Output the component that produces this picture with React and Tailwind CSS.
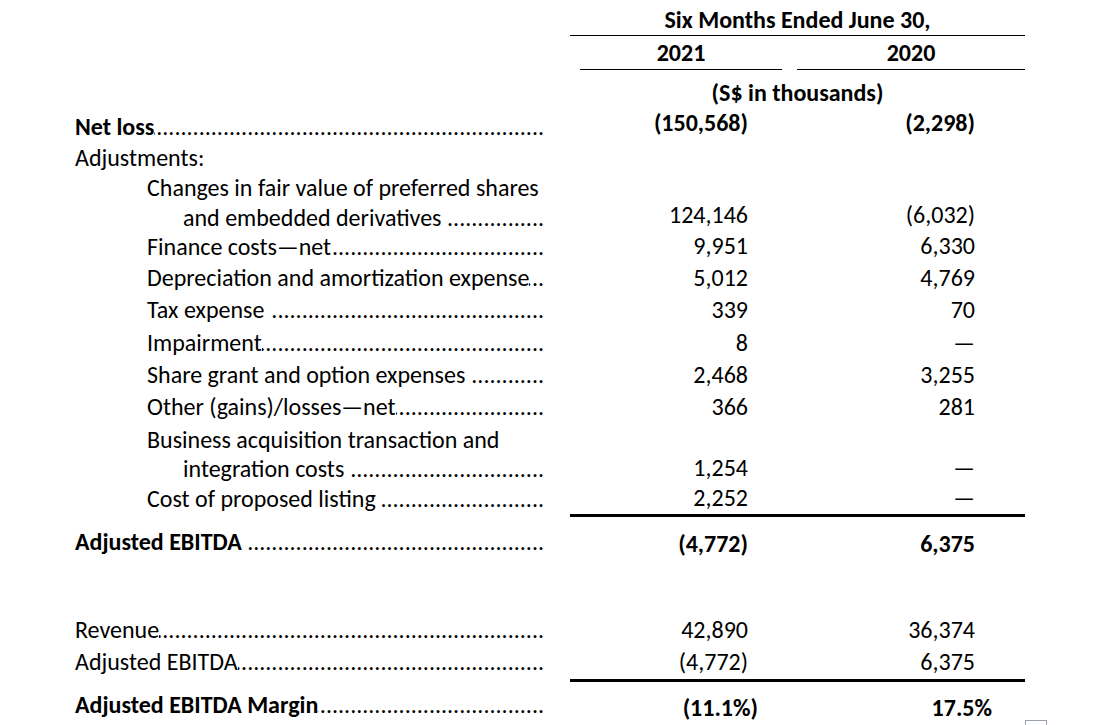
const FONT = "font-['Carlito','Lato','Liberation_Sans',sans-serif]";

const DOTS = ".".repeat(160);

function Leader({ text, bold, space }) {
  return (
    <div className="flex h-[30px] items-center">
      <span className={`shrink-0 whitespace-nowrap ${bold ? "font-bold" : ""}`}>{text}</span>
      <span
        className={`flex min-w-0 flex-1 justify-end overflow-hidden whitespace-nowrap ${
          space ? "ml-[6px]" : ""
        }`}
      >
        <span className="shrink-0">{DOTS}</span>
      </span>
    </div>
  );
}

function Row({ h, label, lines, indent = 0, bold, space, v1, v2, valBold, pr1 = "pr-[49px]", pr2 = "pr-[50px]", lift }) {
  const indentCls = indent === 1 ? "pl-[72px]" : "";
  return (
    <div className={`flex pl-[75px] ${h}`}>
      <div className={`flex w-[469px] flex-col justify-center ${indentCls}`}>
        {lines &&
          lines.map((l, i) => (
            <div key={i} className={`h-[29px] whitespace-nowrap leading-[29px] ${i > 0 ? "pl-[36px]" : ""}`}>
              {i === lines.length - 1 ? <Leader text={l} space={space} /> : l}
            </div>
          ))}
        {label && <Leader text={label} bold={bold} space={space} />}
      </div>
      <div
        className={`ml-[26px] flex w-[227px] items-end justify-end pb-[1px] tabular-nums ${pr1} ${
          valBold ? "font-bold" : ""
        } ${lift ? "mb-[4px]" : ""}`}
      >
        <div className="flex h-[30px] items-center">{v1}</div>
      </div>
      <div
        className={`flex w-[228px] items-end justify-end pb-[1px] tabular-nums ${pr2} ${
          valBold ? "font-bold" : ""
        } ${lift ? "mb-[4px]" : ""}`}
      >
        <div className="flex h-[30px] items-center">{v2}</div>
      </div>
    </div>
  );
}

export default function App() {
  return (
    <div className={`relative h-[725px] w-[1116px] overflow-hidden bg-white text-[24px] text-black ${FONT}`}>
      {/* column headers */}
      <div className="flex pl-[570px]">
        <div className="flex h-[36px] w-[455px] items-center justify-center border-b border-black pt-[4px] font-bold">
          Six Months Ended June 30,
        </div>
      </div>
      <div className="flex h-[34px] pl-[580px]">
        <div className="flex w-[202px] items-center justify-center border-b border-black font-bold tabular-nums">
          2021
        </div>
        <div className="ml-[15px] flex w-[228px] items-center justify-center border-b border-black font-bold tabular-nums">
          2020
        </div>
      </div>
      <div className="flex h-[41px] pl-[570px]">
        <div className="flex w-[455px] items-center justify-center pt-[4px] font-bold">(S$ in thousands)</div>
      </div>

      <Row h="h-[32px]" label="Net loss" bold v1="(150,568)" v2="(2,298)" valBold lift />
      <div className="flex h-[30px] items-center pl-[75px]">Adjustments:</div>
      <Row
        h="h-[58px]"
        indent={1}
        lines={["Changes in fair value of preferred shares", "and embedded derivatives"]}
        space
        v1="124,146"
        v2="(6,032)"
      />
      <Row h="h-[31px]" indent={1} label="Finance costs—net" v1="9,951" v2="6,330" />
      <Row h="h-[32px]" indent={1} label="Depreciation and amortization expense" v1="5,012" v2="4,769" />
      <Row h="h-[32px]" indent={1} label="Tax expense" space v1="339" v2="70" />
      <Row h="h-[33px]" indent={1} label="Impairment" v1="8" v2="—" />
      <Row h="h-[32px]" indent={1} label="Share grant and option expenses" space v1="2,468" v2="3,255" />
      <Row h="h-[32px]" indent={1} label="Other (gains)/losses—net" v1="366" v2="281" />
      <Row
        h="h-[61px]"
        indent={1}
        lines={["Business acquisition transaction and", "integration costs"]}
        space
        v1="1,254"
        v2="—"
      />
      <Row h="h-[30px]" indent={1} label="Cost of proposed listing" space v1="2,252" v2="—" />

      <div className="pl-[570px]">
        <div className="h-[3px] w-[455px] bg-black" />
      </div>

      <div className="pt-[3px]">
        <Row h="h-[44px]" label="Adjusted EBITDA" bold space v1="(4,772)" v2="6,375" valBold lift />
      </div>

      <div className="h-[50px]" />

      <Row h="h-[32px]" label="Revenue" v1="42,890" v2="36,374" />
      <Row h="h-[32px]" label="Adjusted EBITDA" v1="(4,772)" v2="6,375" />

      <div className="pl-[570px] pt-[1px]">
        <div className="h-[3px] w-[455px] bg-black" />
      </div>

      <Row
        h="h-[46px]"
        label="Adjusted EBITDA Margin"
        bold
        v1="(11.1%)"
        v2="17.5%"
        valBold
        pr1="pr-[39px]"
        pr2="pr-[33px]"
        lift
      />

      {/* paste-options marker */}
      <div className="absolute left-[1025px] top-[720px] h-[12px] w-[22px] border border-gray-400 bg-white" />
    </div>
  );
}
